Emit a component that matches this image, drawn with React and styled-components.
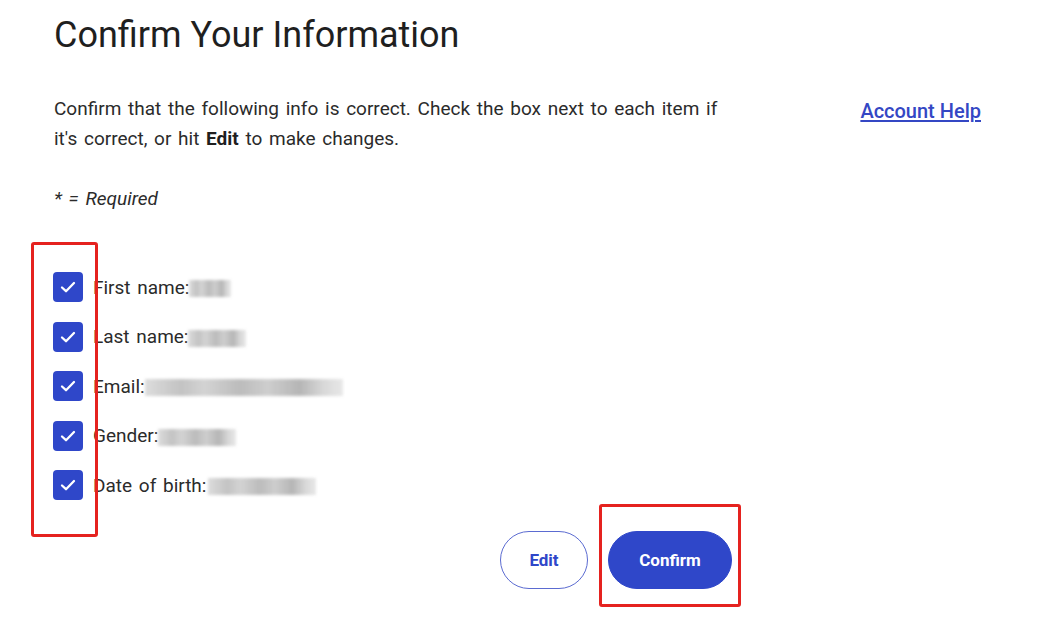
import React from "react";
import styled, { createGlobalStyle } from "styled-components";

const Global = createGlobalStyle`
  html, body { margin: 0; padding: 0; background: #ffffff; }
  body { font-family: Roboto, "Liberation Sans", sans-serif; color: #262626; }
`;

const Page = styled.main`
  padding: 0 56px 48px 54px;
`;

const Title = styled.h1`
  margin: 14px 0 0;
  font-size: 36px;
  line-height: 43px;
  font-weight: 400;
  color: #1f1f1f;
`;

const IntroRow = styled.div`
  display: flex;
  justify-content: space-between;
  align-items: flex-start;
  margin-top: 37px;
`;

const Intro = styled.p`
  margin: 0;
  width: 672px;
  font-size: 19px;
  line-height: 30px;
  word-spacing: 2px;
  color: #2b2b2b;
`;

const Strong = styled.strong`
  font-weight: 700;
  color: #1f1f1f;
`;

const HelpLink = styled.a`
  margin-top: 2px;
  font-size: 20px;
  line-height: 30px;
  font-weight: 500;
  color: #3447c4;
  text-decoration: underline;
  text-underline-offset: 2px;
  cursor: pointer;
`;

const Required = styled.p`
  margin: 30px 0 0;
  font-size: 19px;
  line-height: 30px;
  word-spacing: 2px;
  font-style: italic;
  color: #2b2b2b;
`;

const ListWrap = styled.div`
  position: relative;
  margin-top: 58px;
  margin-left: -1px;
`;

const Highlight = styled.div`
  position: absolute;
  border: 3px solid #e5221f;
  border-radius: 3px;
  pointer-events: none;
`;

const ListHighlight = styled(Highlight)`
  left: -22px;
  top: -30px;
  width: 61px;
  height: 289px;
`;

const List = styled.ul`
  list-style: none;
  margin: 0;
  padding: 0;
  display: flex;
  flex-direction: column;
  gap: 19.5px;
`;

const Row = styled.li`
  display: flex;
  align-items: center;
  height: 30px;
  gap: 10px;
  font-size: 19px;
  word-spacing: 2px;
  color: #2b2b2b;
`;

const Box = styled.span`
  width: 30px;
  height: 30px;
  border-radius: 4px;
  background: #2f47c9;
  display: flex;
  align-items: center;
  justify-content: center;
  flex: none;
`;

const Label = styled.span`
  display: flex;
  align-items: center;
  white-space: nowrap;
`;

const Redact = styled.span`
  display: inline-block;
  height: 17px;
  margin-top: 3px;
  width: ${(p) => p.$w}px;
  margin-left: ${(p) => p.$ml || 0}px;
  background: linear-gradient(
    90deg,
    #d9d9d9 0%, #bdbdbd 18%, #cfcfcf 30%, #b5b5b5 48%,
    #c9c9c9 62%, #aeaeae 78%, #d4d4d4 90%, #e6e6e6 100%
  );
  filter: blur(1.6px);
  opacity: 0.9;
`;

const Buttons = styled.div`
  display: flex;
  gap: 20px;
  margin: 31px 0 0 446px;
`;

const Pill = styled.button`
  height: 58px;
  width: ${(p) => p.$w}px;
  border-radius: 29px;
  font-family: Roboto, "Liberation Sans", sans-serif;
  font-size: 17px;
  font-weight: 700;
  cursor: pointer;
  border: 1.5px solid ${(p) => (p.$primary ? "#2f47c9" : "#5b6bd1")};
  background: ${(p) => (p.$primary ? "#2f47c9" : "#ffffff")};
  color: ${(p) => (p.$primary ? "#ffffff" : "#2f47c9")};
`;

const ConfirmWrap = styled.div`
  position: relative;
`;

const ButtonHighlight = styled(Highlight)`
  left: -9px;
  top: -27px;
  width: 136px;
  height: 97px;
`;

const Check = () => (
  <svg width="18" height="18" viewBox="0 0 18 18" fill="none">
    <polyline
      points="3,9.5 7,13.2 15,5"
      stroke="#ffffff"
      strokeWidth="2.3"
      strokeLinecap="round"
      strokeLinejoin="round"
    />
  </svg>
);

const items = [
  { label: "First name:", w: 42, ml: 0 },
  { label: "Last name:", w: 58, ml: 0 },
  { label: "Email:", w: 198, ml: 0 },
  { label: "Gender:", w: 78, ml: 0 },
  { label: "Date of birth:", w: 108, ml: 2 },
];

export default function App() {
  return (
    <>
      <Global />
      <Page>
        <Title>Confirm Your Information</Title>
        <IntroRow>
          <Intro>
            Confirm that the following info is correct. Check the box next to each item if
            it's correct, or hit <Strong>Edit</Strong> to make changes.
          </Intro>
          <HelpLink>Account Help</HelpLink>
        </IntroRow>
        <Required>* = Required</Required>
        <ListWrap>
          <List>
            {items.map((it) => (
              <Row key={it.label}>
                <Box>
                  <Check />
                </Box>
                <Label>
                  {it.label}
                  <Redact $w={it.w} $ml={it.ml} />
                </Label>
              </Row>
            ))}
          </List>
          <ListHighlight />
        </ListWrap>
        <Buttons>
          <Pill $w={88}>Edit</Pill>
          <ConfirmWrap>
            <Pill $primary $w={124}>Confirm</Pill>
            <ButtonHighlight />
          </ConfirmWrap>
        </Buttons>
      </Page>
    </>
  );
}
